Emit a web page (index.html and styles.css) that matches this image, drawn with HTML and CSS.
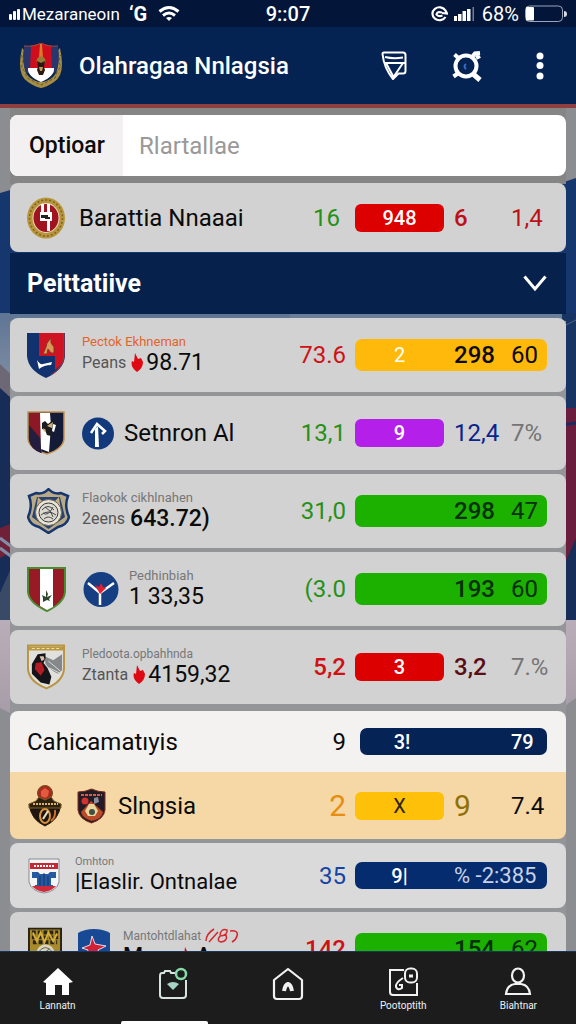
FILE: index.html
```html
<!DOCTYPE html>
<html lang="id">
<head>
<meta charset="utf-8">
<meta name="viewport" content="width=device-width, initial-scale=1">
<title>Olahragaa Nnlagsia</title>
<link rel="stylesheet" href="styles.css">
</head>
<body>
<div class="app">
  <div class="status">
    <div class="status-left">
      <svg width="12" height="14" viewBox="0 0 12 14" fill="#fff"><rect x="0" y="7" width="3" height="6" rx="1"/><rect x="4" y="4" width="3" height="9" rx="1"/><rect x="8" y="2" width="3" height="11" rx="1"/></svg>
      <span class="operator">Mezaraneoın</span><span class="carrier">‘G</span>
      <svg width="22" height="18" viewBox="0 0 22 18" fill="none" stroke="#fff" stroke-width="3"><path d="M1.500 6.500Q11-1.500 20.500 6.500M5 10.500Q11 5.500 17 10.500"/><path d="M8 13q3-2 6 0l-3 3z" fill="#fff" stroke="none"/></svg>
    </div>
    <div class="status-time">9::07</div>
    <div class="status-right">
      <svg width="18" height="18" viewBox="0 0 18 18" fill="none" stroke="#fff" stroke-width="2.200"><path d="M15.500 5.500A7 6.500 0 1 0 15.500 12M15.500 5.500L17 8.500L12 8"/><path d="M12 7.500Q7 6 6.500 9.500Q8 12 12.500 10.500"/></svg>
      <svg width="22" height="16" viewBox="0 0 22 16" fill="#fff"><rect x="0" y="10" width="3" height="5"/><rect x="4" y="8" width="3.500" height="7"/><rect x="8.500" y="5" width="3.500" height="10"/><rect x="13" y="3" width="3.500" height="12"/><rect x="18.500" y="1" width="1.500" height="14" opacity=".45"/></svg>
      <span>68%</span>
      <svg width="42" height="18" viewBox="0 0 42 18"><rect x=".5" y="1" width="37" height="15.500" rx="4" fill="none" stroke="#9aa6bd"/><rect x="1" y="2" width="8" height="13.500" rx="1" fill="#fff"/><path d="M39 6q3 0 3 3t-3 3z" fill="#d5d9e3"/></svg>
    </div>
  </div>
  <header class="bar">
    <svg class="logo" width="44" height="46" viewBox="0 0 44 46">
      <path d="M3 5Q-3 32 9 39Q16 44 22 45Q28 44 35 39Q47 32 41 5L38 8Q41 28 34 34Q28 39 22 39Q16 39 10 34Q3 28 6 8Z" fill="#a58d45"/>
      <path d="M2.500 12L4 18L2.500 24L6 29L8 35L14 38L22 42L30 38L36 35L38 29L41.500 24L40 18L41.500 12" fill="none" stroke="#6b5824" stroke-width="1" stroke-dasharray="3 2"/>
      <path d="M5 3Q15 4 22 0Q29 4 39 3Q42 21 36 30H8Q2 21 5 3Z" fill="#28366e"/>
      <path d="M12 3L22 0L32 3L33 26H11Z" fill="#cf0d1c"/>
      <path d="M9 25H35Q36 33 22 39Q8 33 9 25Z" fill="#fff"/>
      <path d="M21 1h2l1 14h-4z" fill="#d97b28"/><circle cx="22" cy="18" r="4.500" fill="#9a7a35"/><path d="M18 18l4 2 4-2-1 6 1 3-2 5h-4l-2-5 1-3z" fill="#2a1712"/><path d="M20 24h4l-1 4h-2z" fill="#c49a4c"/>
      <path d="M5 3Q15 4 22 0Q29 4 39 3" fill="none" stroke="#a84d36"/>
    </svg>
    <h1>Olahragaa Nnlagsia</h1>
    <button class="icon-btn" aria-label="Filter"><svg width="26" height="30" viewBox="0 0 26 30" fill="none" stroke="#fff" stroke-width="2" stroke-linejoin="round"><path d="M1.500 3Q1.500 1.500 3 1.500H22Q24.500 1.500 24.500 4V20Q24.500 22.500 22 22.500H17.500L12 28Q3 17 1.500 3Z"/><path d="M4 6Q12 8 22 6.500M4 12H24M22 12L12.500 26L5 12"/></svg></button>
    <button class="icon-btn" aria-label="Cari"><svg width="30" height="32" viewBox="0 0 30 32" fill="none" stroke="#fff"><circle cx="14" cy="16" r="10.500" stroke-width="4"/><path d="M20 23L28 30" stroke-width="5"/><path d="M2.500 4.500L7 8.500M1.500 26.500L6.500 23" stroke-width="4"/><path d="M20 7L23 3.500L28 3M24 8L28 6" stroke-width="4"/><path d="M14 14q-3 2 0 5" stroke="#3a6ec4" stroke-width="2"/></svg></button>
    <button class="icon-btn" aria-label="Menu"><svg width="10" height="28" viewBox="0 0 10 28" fill="#fff"><circle cx="5" cy="4" r="3.500"/><circle cx="5" cy="13.500" r="3.500"/><circle cx="5" cy="24" r="3.500"/></svg></button>
  </header>

  <div class="stage">
    <svg class="backdrop" viewBox="0 0 576 843" preserveAspectRatio="none" aria-hidden="true">
      <defs>
        <linearGradient id="sky" x1="0" y1="0" x2="0" y2="1"><stop offset="0" stop-color="#5f7594"/><stop offset="1" stop-color="#8c98ab"/></linearGradient>
        <linearGradient id="mist" x1="0" y1="0" x2="0" y2="1"><stop offset="0" stop-color="#b9aeb8"/><stop offset="1" stop-color="#a69ca8"/></linearGradient>
      </defs>
      <rect width="576" height="843" fill="#8b8d91"/>
      <path d="M0 85L24 78H552L576 70V207H0Z" fill="#16376e"/>
      <rect y="205" width="290" height="100" fill="url(#sky)"/>
      <rect x="290" y="205" width="286" height="110" fill="#183463"/>
      <rect x="290" y="205" width="272" height="8" fill="#6a7d99"/>
      <path d="M0 256L20 275V310H0Z" fill="#6d6876"/>
      <path d="M0 280L20 298V512H0Z" fill="#182c58"/>
      <path d="M0 420L20 412V440L0 450Z" fill="#702039"/><path d="M0 430L20 445M0 440L20 455" stroke="#7f8da8" stroke-width="3"/><path d="M0 485L20 440V512H0Z" fill="#394a67"/>
      <path d="M556 222L576 212" stroke="#4e658c"/>
      <path d="M290 302L576 300V440L556 512H290Z" fill="#6a1d3d"/><path d="M556 318L576 315" stroke="#1b2d60" stroke-width="3"/>
      <path d="M556 475L576 430V512H556Z" fill="#172e58"/>
      <path d="M0 512H576V590Q560 600 556 610H20L0 600Z" fill="url(#mist)"/>
      <rect x="10" y="213" width="556" height="630" fill="#939598"/>
      <rect x="10" y="0" width="556" height="76" fill="#858585"/>
    </svg>
    <main class="list">
      <form class="search card">
        <label for="q">Optioar</label>
        <input id="q" type="text" placeholder="Rlartallae">
      </form>

      <article class="card row row-fav">
        <div class="team">
          <svg class="crest" width="38" height="42" viewBox="0 0 38 42"><ellipse cx="19" cy="21" rx="19" ry="20.500" fill="#b8963c"/><ellipse cx="19" cy="21" rx="16.500" ry="18" fill="none" stroke="#7d6224" stroke-width="1.500" stroke-dasharray="2 2"/><ellipse cx="19" cy="21" rx="13.500" ry="15" fill="#e8dcc0"/><ellipse cx="19" cy="21" rx="12.500" ry="14" fill="#a01420"/><path d="M14 7h3v14h-3zM20 7h3v8h-3zM20 22h3v12h-3z" fill="#fff"/><path d="M13 15h12v9H13z" fill="#fff"/><path d="M14 18h7v3h-7zM18 20h5v2h-5z" fill="#222"/></svg>
          <span class="name">Barattia Nnaaai</span>
        </div>
        <span class="val green">16</span>
        <div class="stats"><span class="pill red-bg">948</span><b class="s2 crimson">6</b><span class="s3 crimson">1,4</span></div>
      </article>

      <button class="section"><span>Peittatiive</span><svg width="24" height="17" viewBox="0 0 24 17" fill="none" stroke="#fff" stroke-width="3"><path d="M1.500 1.500L12 14L22.500 1.500"/></svg></button>

      <article class="card row">
        <div class="team">
          <svg class="crest" width="38" height="46" viewBox="0 0 38 46"><path d="M0 1H38V24Q37 38 19 46Q1 38 0 24Z" fill="#12326f"/><path d="M12 1H37V24Q36 33 28 38V24H12Z" fill="#d01322"/><path d="M37 1V24Q36 36 24 43" fill="none" stroke="#a83a3a"/><path d="M16 22l3-7 1-4 4-5v5l3 4v6h-3l-3-4-1 5z" fill="#d99a56" stroke="#8a3523"/><path d="M10 28q3 5 6 4l9-2-1 3q-7 0-12 4z" fill="#fff"/></svg>
          <div class="lines"><span class="cap orange">Pectok Ekhneman</span><span class="sub"><small>Peans</small><svg class="flame" width="12" height="20" viewBox="0 0 12 20"><path d="M4 0L7 6L10 5L12 9Q12 15 6 19Q-1 14 1 8L3 9Z" fill="#df0913"/></svg><span>98.71</span></span></div>
        </div>
        <span class="val red">73.6</span>
        <div class="stats wide amber-bg"><span class="s1">2</span><b class="s2">298</b><span class="s3">60</span></div>
      </article>

      <article class="card row">
        <div class="team">
          <svg class="crest" width="38" height="44" viewBox="0 0 38 44"><path d="M1 1H37V28Q36 38 20 43Q2 38 1 28Z" fill="#141b36" stroke="#c49252" stroke-width="1.500"/><path d="M2 2H15V42Q3 38 2 28Z" fill="#8c1725"/><path d="M2 14L14 28V42Q3 38 2 28Z" fill="#241d3e"/><path d="M13 2H23L24 15L22 41L14 38Z" fill="#fff"/><path d="M15 12l3-2 3 3 4-3 2 4-3 5v6l-4-1-2-5-3-1z" fill="#1c1b20"/><path d="M20 15l6-4-1 6zM16 17l3 2-2 2z" fill="#d4b077"/><path d="M26 13l3 1-2 7-2-1z" fill="#fff"/></svg>
          <svg class="badge" width="32" height="33" viewBox="0 0 32 33"><circle cx="16" cy="16.500" r="16" fill="#12397c"/><path d="M9 16L15 7L23 14L20 17" fill="none" stroke="#fff" stroke-width="2.500"/><path d="M13 12l3-3 1 21h-4z" fill="#fff"/></svg>
          <span class="name">Setnron Al</span>
        </div>
        <span class="val green">13,1</span>
        <div class="stats"><span class="pill purple-bg">9</span><span class="s2 blue">12,4</span><span class="s3 gray">7%</span></div>
      </article>

      <article class="card row">
        <div class="team">
          <svg class="crest crest-wide" width="43" height="46" viewBox="0 0 43 46"><path d="M21.500 1Q27 7 34 5L41 8Q37 18 42 29Q40 37 31 39L21.500 45L12 39Q3 37 1 29Q6 18 2 8L9 5Q16 7 21.500 1Z" fill="#b8a987" stroke="#17366e" stroke-width="2.500"/><path d="M10 9L33 9L38 29L21.500 41L5 29Z" fill="#294271"/><path d="M11 9l5 5-7 9zM32 9l-5 5 7 9z" fill="#c4ac80"/><circle cx="21.500" cy="24.500" r="13" fill="#e9e3d2" stroke="#6e6754"/><circle cx="21.500" cy="24.500" r="9.500" fill="#ddd9cc" stroke="#343a46"/><path d="M15 22q6-7 12 0M14 27q7-6 15 0M17 31q4-4 9 0M18 19q7 4 8 10M16 25q5 4 10-6" stroke="#3f4751" fill="none"/></svg>
          <div class="lines"><span class="cap">Flaokok cikhlnahen</span><span class="sub"><small>2eens</small><b>643.72)</b></span></div>
        </div>
        <span class="val green">31,0</span>
        <div class="stats wide green-bg"><b class="s2">298</b><span class="s3">47</span></div>
      </article>

      <article class="card row">
        <div class="team">
          <svg class="crest" width="39" height="45" viewBox="0 0 39 45"><path d="M1 1H38V25Q37 36 20 44Q2 36 1 25Z" fill="#981a24" stroke="#4b8b32" stroke-width="2"/><path d="M13 2H26V40L20 43L13 39Z" fill="#fff"/><path d="M15 28l4 2v-7l2 4-1 3 5-2-3 4 1 2-3-1-4 2v-4z" fill="#2d472e"/></svg>
          <svg class="badge" width="36" height="37" viewBox="0 0 36 37"><circle cx="18" cy="18.500" r="17.500" fill="#153e83"/><path d="M5 12L17 22L31 12M17 20V34" fill="none" stroke="#fff" stroke-width="2.500"/><path d="M12 14l4 2 2-4 2 4 3 1-6 6z" fill="#df2230"/></svg>
          <div class="lines lines-tight"><span class="cap">Pedhinbiah</span><span class="sub"><span>1 33,35</span></span></div>
        </div>
        <span class="val green">(3.0</span>
        <div class="stats wide green-bg"><b class="s2">193</b><span class="s3">60</span></div>
      </article>

      <article class="card row">
        <div class="team">
          <svg class="crest" width="38" height="46" viewBox="0 0 39 46"><path d="M1 1H38V25Q37 38 20 45Q2 38 1 25Z" fill="#e1e0dc" stroke="#b89443" stroke-width="2"/><path d="M2 2H37V6H2Z" fill="#b99a42"/><path d="M5 4H34" stroke="#f2e2a5" stroke-dasharray="3 2"/><path d="M18 12l9 4 9-6v16l-4 4q-9-4-13-10z" fill="#85888a"/><path d="M22 17l12 10M23 24l10 5" stroke="#d9dada"/><path d="M11 10l8-1v5l-2 5 4 5 4 9-2 8-9-2-9-9V20z" fill="#151418"/><path d="M9 19l6-1 3 8-4 6-6-7z" fill="#b31b27"/><path d="M13 12h4l1 3-3 2z" fill="#dec2a4"/></svg>
          <div class="lines"><span class="cap cap-md">Pledoota.opbahhnda</span><span class="sub"><small>Ztanta</small><svg class="flame" width="12" height="20" viewBox="0 0 12 20"><path d="M4 0L7 6L10 5L12 9Q12 15 6 19Q-1 14 1 8L3 9Z" fill="#df0913"/></svg><span>4159,32</span></span></div>
        </div>
        <span class="val red strong">5,2</span>
        <div class="stats"><span class="pill red-bg">3</span><b class="s2 maroon">3,2</b><span class="s3 gray">7.%</span></div>
      </article>

      <section class="pair">
        <div class="row row-head">
          <div class="team"><span class="name">Cahicamatıyis</span></div>
          <span class="val">9</span>
          <div class="stats wide slim inset navy-bg"><b class="s1">3!</b><b class="s3 right-s">79</b></div>
        </div>
        <div class="row row-hot">
          <div class="team">
            <svg class="crest crest-sm" width="34" height="42" viewBox="0 0 34 42"><circle cx="17" cy="8" r="7.500" fill="#a92b20" stroke="#72501c"/><path d="M13 6l4-3 4 3-1 5-3 2-4-2z" fill="#e35b3d"/><path d="M1 19Q3 35 17 41Q31 35 33 19Z" fill="#1d1511" stroke="#33210f"/><path d="M8 16L11 12L17 15L23 12L26 16L33 19V23H1V19Z" fill="#2a2113" stroke="#806124"/><path d="M5 19h25" stroke="#e0b35b" stroke-width="2" stroke-dasharray="2 1"/><ellipse cx="17" cy="31" rx="5" ry="7" fill="none" stroke="#d69339" stroke-width="2"/><path d="M15 34l5-8" stroke="#eee1c0" stroke-width="2"/><path d="M27 25q1 7-4 11" fill="none" stroke="#d16e2c" stroke-width="2"/></svg>
            <svg class="badge badge-sm" width="29" height="36" viewBox="0 0 29 36"><path d="M1 4Q8 4 14.500 1Q21 4 28 4V22Q27 31 14.500 35Q2 31 1 22Z" fill="#241c25" stroke="#7c2d21"/><path d="M4 7H25" stroke="#d85c47" stroke-width="2" stroke-dasharray="3 1"/><path d="M4 24L14 13L26 24Q25 31 14.500 33Q5 30 4 24Z" fill="#ba4a28"/><circle cx="8" cy="13" r="3.500" fill="#d23330"/><path d="M17 10l4-1 1 5-5 2z" fill="#8a8ca0"/><path d="M12 16h5l4 7-3 5h-7l-3-5z" fill="#ead69b"/><circle cx="15" cy="24" r="3" fill="#434f42"/></svg>
            <span class="name">Slngsia</span>
          </div>
          <span class="val big tangerine">2</span>
          <div class="stats"><span class="pill gold-bg">X</span><span class="s2 big olive">9</span><span class="s3">7.4</span></div>
        </div>
      </section>

      <article class="card row row-short">
        <div class="team">
          <svg class="crest crest-sm" width="32" height="36" viewBox="0 0 32 36"><path d="M1 1H31V24Q29 33 16 35Q3 33 1 24Z" fill="#f5f5f5" stroke="#868b93"/><path d="M2 5H30V11H2Z" fill="#c62936"/><path d="M6 8H27" stroke="#fff" stroke-width="2" stroke-dasharray="2 1"/><path d="M4 14h6l2 2h8l2-2h6v6h-5v7h2v3H7v-3h2v-7H4z" fill="#265aa0"/><path d="M12 18v10M16 15v14M20 18v10" stroke="#103668"/><path d="M4 28H28Q24 33 16 34Q8 33 4 28Z" fill="#cd2b3c"/></svg>
          <div class="lines"><span class="cap cap-sm">Omhton</span><span class="name name-sm">|Elaslir. Ontnalae</span></div>
        </div>
        <span class="val blue2">35</span>
        <div class="stats wide slim royal-bg"><b class="s1">9|</b><span class="s23">% -2:385</span></div>
      </article>

      <article class="card row">
        <div class="team">
          <svg class="crest crest-sm" width="34" height="44" viewBox="0 0 35 44"><path d="M0 0H35V30L18 44L0 30Z" fill="#282315"/><path d="M2 2H33V28L18 41L2 28Z" fill="#a98a2b"/><path d="M4 5h27M4 10h27M5 15h25" stroke="#2a2415" stroke-width="4" stroke-dasharray="4 2"/><path d="M5 5l4 9 4-9 4 10 4-10 5 9 4-8" fill="none" stroke="#d3ae3a" stroke-width="2"/><circle cx="18" cy="26" r="9" fill="#d8d4bd"/><path d="M11 25q7-9 14 0M14 28l8-6" stroke="#655f3b" fill="none"/></svg>
          <svg class="badge badge-sm" width="34" height="42" viewBox="0 0 34 42"><path d="M1 5Q8 1 17 1Q26 1 33 5V27Q31 36 17 41Q3 36 1 27Z" fill="#174995"/><path d="M15 8L18 16L29 18L21 22L25 33L16 26L8 33L11 22L5 20L13 17Z" fill="#d02136" stroke="#e8d9e3"/></svg>
          <div class="lines"><span class="cap cap-md cap-mark">Mantohtdlahat<svg width="34" height="16" viewBox="0 0 34 16" fill="none" stroke="#d6262b" stroke-width="1.500"><path d="M9 1Q1 6 1 13M13 4L4 14M15 7Q16 0 22 2Q23 7 15 8Q11 13 16 14Q23 13 21 7L15 8M25 3Q34 2 32 8Q31 12 27 14"/></svg></span><span class="sub"><b>Manu</b><svg class="flame" width="12" height="20" viewBox="0 0 12 20"><path d="M4 0L7 6L10 5L12 9Q12 15 6 19Q-1 14 1 8L3 9Z" fill="#df0913"/></svg><b>A</b></span></div>
        </div>
        <span class="val red strong">142</span>
        <div class="stats wide green-bg"><b class="s2">154</b><span class="s3">62</span></div>
      </article>
    </main>
  </div>

  <nav class="nav">
    <a href="#home"><svg width="32" height="30" viewBox="0 0 32 30"><path d="M16 1L31 15L27 16V28H20V18H13V28H4V16L1 15Z" fill="#fff"/></svg><span>Lannatn</span></a>
    <a href="#cards" class="on" aria-label="Kartu"><svg width="30" height="32" viewBox="0 0 30 32" fill="none"><path d="M17 6H13L12 4H7L6 6H4Q2 6 2 9V28Q2 31 5 31H25Q28 31 28 28V13" stroke="#d7e4df" stroke-width="2"/><circle cx="23" cy="7" r="5" stroke="#86dba8" stroke-width="2.500"/><path d="M9 17Q15 13 21 17L15 23Z" fill="#a7d4c5"/></svg></a>
    <a href="#house" aria-label="Rumah"><svg width="32" height="34" viewBox="0 0 32 34" fill="none" stroke="#f1f1f1" stroke-width="2.200" stroke-linejoin="round"><path d="M2 13L16 2L30 13V29Q30 32 27 32H5Q2 32 2 29Z"/><path d="M12 24Q13 18 16 17Q19 18 20 24" stroke-width="4"/></svg></a>
    <a href="#report"><svg width="31" height="30" viewBox="0 0 31 30" fill="none" stroke="#f1f1f1" stroke-width="2"><path d="M16 3H2V25Q2 28 5 28H29V16"/><rect x="17" y="1.500" width="12" height="14" rx="5"/><path d="M21 9H25" stroke-width="3"/><path d="M15 11Q7 16 8 20Q10 24 14 21L14 18H11"/></svg><span>Pootoptith</span></a>
    <a href="#profile"><svg width="28" height="30" viewBox="0 0 28 30" fill="none" stroke="#f1f1f1" stroke-width="2.200"><ellipse cx="14" cy="8.500" rx="6" ry="7"/><path d="M2 27Q3 18 11 17H17Q25 18 26 27Z"/></svg><span>Biahtnar</span></a>
  </nav>
</div>
</body>
</html>
```
FILE: styles.css
```css
* { box-sizing: border-box; }
body { margin: 0; font-family: Roboto, "Liberation Sans", sans-serif; color: #0b0b0b; background: #8b8d91; }
button { border: 0; background: none; padding: 0; font: inherit; color: inherit; cursor: pointer; }
svg { display: block; flex: none; }
.app { display: flex; flex-direction: column; height: 100vh; }

.status { display: grid; grid-template-columns: 1fr auto 1fr; align-items: center; height: 27px; padding: 0 9px; background: #031538; color: #fff; font-size: 20px; line-height: 26px; }
.status-left, .status-right { display: flex; align-items: center; }
.status-left { gap: 1px; }
.operator { font-size: 17px; }
.carrier { margin: 0 10px 0 8px; font-weight: 700; }
.status-time { font-weight: 500; }
.status-right { justify-content: flex-end; gap: 6px; }

.bar { display: flex; align-items: center; height: 81px; padding: 0 24px 0 19px; background: #052352; border-bottom: 4px solid #8f3f40; color: #fff; }
.logo { margin-right: 16px; }
.bar h1 { flex: 1; margin: 0; font-size: 24px; line-height: 32px; font-weight: 500; white-space: nowrap; }
.icon-btn { display: flex; justify-content: center; width: 73px; }
.icon-btn:last-child { width: 24px; margin-left: 25px; }

.stage { position: relative; flex: 1; min-height: 0; }
.backdrop { position: absolute; inset: 0; width: 100%; height: 100%; }
.list { position: relative; display: flex; flex-direction: column; gap: 4px; height: 100%; padding: 7px 10px 8px; overflow-y: auto; scrollbar-width: none; }
.list > * { flex: none; }

.card { border-radius: 8px; background: #d2d2d2; }
.search { display: flex; height: 61px; background: #fff; overflow: hidden; }
.search label { display: flex; align-items: center; width: 113px; padding-left: 19px; background: #f3f0f1; font-size: 23px; font-weight: 500; }
.search input { flex: 1; min-width: 0; border: 0; outline: 0; padding: 0 16px; background: none; font: 24px Roboto, sans-serif; }
.search input::placeholder { color: #999; opacity: 1; }

.row { display: grid; grid-template-columns: 1fr auto 192px; align-items: center; column-gap: 9px; min-height: 74px; padding: 0 19px 0 17px; }
.row-fav { min-height: 69px; margin-top: 3px; }
.row-short { min-height: 65px; background: #dadada; }
.team { display: flex; align-items: center; min-width: 0; white-space: nowrap; }
.crest { margin-right: 17px; }
.crest-wide { margin-right: 12px; }
.crest-sm { margin: 0 15px 0 1px; }
.badge { margin-right: 10px; }
.badge-sm { margin-right: 12px; }
.name { font-size: 24px; line-height: 28px; }
.name-sm { font-size: 22px; }
.row-fav .name { margin-left: -3px; }
.lines { display: flex; flex-direction: column; }
.cap { font-size: 13px; line-height: 16px; color: #777; }
.cap-md { font-size: 12px; }
.cap-sm { font-size: 11px; line-height: 12px; }
.cap-mark { display: flex; gap: 4px; }
.sub { display: flex; align-items: center; font-size: 23px; line-height: 26px; }
.sub small { margin-right: 5px; font-size: 16px; color: #555; }
.sub b { font-weight: 500; }
.flame { margin-right: 3px; }
.val { font-size: 24px; text-align: right; }
.row-fav .val { padding-right: 6px; }
.strong { font-weight: 500; }

.stats { display: grid; grid-template-columns: 89px 47px 1fr; column-gap: 10px; align-items: center; font-size: 24px; line-height: 28px; white-space: nowrap; }
.stats b { font-weight: 500; }
.wide { height: 32px; border-radius: 7px; }
.slim { height: 27px; color: #fff; }
.inset { grid-template-columns: 84px 47px 1fr; margin-left: 5px; }
.pill { height: 28px; border-radius: 6px; color: #fff; font-size: 20px; font-weight: 500; text-align: center; }
.s1 { grid-column: 1; text-align: center; color: #fff; font-size: 20px; }
.s2 { grid-column: 2; }
.s3 { grid-column: 3; }
.s23 { grid-column: 2 / 4; font-size: 22px; color: #c8d2e6; }
.right-s { font-size: 20px; }
.stats .big, .big { font-size: 30px; }

.section { display: flex; align-items: center; justify-content: space-between; height: 61px; margin-top: -3px; padding: 0 19px 0 17px; background: #06214b; color: #fff; font-size: 25px; font-weight: 700; }
.pair { margin-top: 3px; border-radius: 8px; overflow: hidden; }
.row-head { min-height: 61px; background: #f4f1f1; }
.row-hot { min-height: 67px; background: #f5d8a6; }

.green { color: #269116; }
.red { color: #cf1115; }
.crimson { color: #bd1118; }
.maroon { color: #5a0d14; }
.blue { color: #09248f; }
.blue2 { color: #1544a6; }
.gray { color: #747474; }
.orange { color: #e2642c; }
.tangerine { color: #e88d10; }
.olive { color: #8d7208; }
.red-bg { background: #dc0000; }
.purple-bg { background: #b51fea; }
.amber-bg { background: #ffb90a; }
.gold-bg { background: #ffc00a; color: #2c2410; font-weight: 400; }
.green-bg { background: #1cb000; color: #06300a; }
.navy-bg { background: #052455; }
.royal-bg { background: #062c70; }

.nav { display: grid; grid-template-columns: repeat(5, 1fr); height: 73px; background: #1c1c1d; border-top: 1px solid #18345f; }
.nav a { position: relative; display: flex; flex-direction: column; align-items: center; gap: 2px; padding-top: 15px; color: #f1f1f1; font-size: 10px; line-height: 14px; text-decoration: none; }
.nav .on::after { content: ""; position: absolute; left: 6px; right: 22px; bottom: 0; height: 3px; border-radius: 2px 2px 0 0; background: #fff; }
```
